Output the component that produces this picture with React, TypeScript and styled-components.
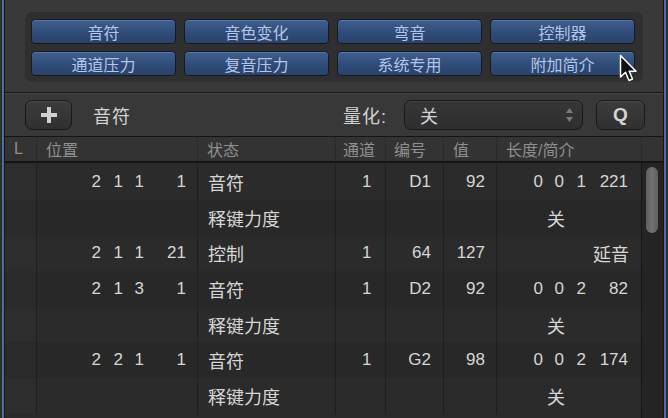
import React from "react";
import styled, { createGlobalStyle } from "styled-components";

const Global = createGlobalStyle`
  html, body { margin: 0; padding: 0; background: #1e1e1e; }
  body { font-family: "Liberation Sans", "Noto Sans CJK SC", sans-serif; }
`;

const Frame = styled.div`
  position: relative;
  width: 668px;
  height: 418px;
  display: flex;
  overflow: hidden;
  background: #2a2a2a;
`;

const Edge = styled.div<{ $side: "left" | "right" }>`
  flex: 0 0 auto;
  width: 5px;
  box-sizing: border-box;
  background: #4a6fa6;
  border-left: ${(p) => (p.$side === "left" ? "2px solid #2e2e2e" : "1px solid #151515")};
  border-right: ${(p) => (p.$side === "left" ? "1px solid #151515" : "2px solid #2e2e2e")};
`;

const Main = styled.div`
  flex: 1;
  display: flex;
  flex-direction: column;
  min-width: 0;
`;

const TopPanel = styled.div`
  height: 93px;
  box-sizing: border-box;
  padding: 12px 20px 0 20px;
  background: #393939;
  border-bottom: 1px solid #141414;
`;

const ButtonTray = styled.div`
  height: 70px;
  box-sizing: border-box;
  padding: 7px 4px 6px 6px;
  border-radius: 7px;
  background: #2f2f2f;
  display: grid;
  grid-template-columns: repeat(4, 145px);
  grid-template-rows: 25px 25px;
  column-gap: 8px;
  row-gap: 7px;
`;

const EventButton = styled.div`
  box-sizing: border-box;
  border-radius: 4px;
  border: 1px solid #141a24;
  background: linear-gradient(#41608f, #2f4b78 55%, #2a436c);
  box-shadow: inset 0 1px 0 rgba(150, 180, 230, 0.25);
  color: #b3c6e8;
  font-size: 16px;
  display: flex;
  align-items: center;
  justify-content: center;
`;

const Toolbar = styled.div`
  height: 44px;
  box-sizing: border-box;
  padding: 0 18px 0 20px;
  display: flex;
  align-items: center;
  background: #383838;
  border-top: 1px solid #454545;
  border-bottom: 1px solid #141414;
`;

const ToolButton = styled.div<{ $w: number }>`
  box-sizing: border-box;
  width: ${(p) => p.$w}px;
  height: 30px;
  border-radius: 7px;
  border: 1px solid #181818;
  background: linear-gradient(#3c3c3c, #303030);
  box-shadow: inset 0 1px 0 rgba(255, 255, 255, 0.08);
  display: flex;
  align-items: center;
  justify-content: center;
  color: #d4d4d4;
  font-weight: bold;
  font-size: 19px;
`;

const ToolLabel = styled.span<{ $ml: number }>`
  margin-left: ${(p) => p.$ml}px;
  color: #d2d2d2;
  font-size: 18px;
  letter-spacing: 1px;
`;

const Spacer = styled.div`
  flex: 1;
`;

const Select = styled.div`
  box-sizing: border-box;
  width: 179px;
  height: 30px;
  margin: 0 13px 0 17px;
  border-radius: 7px;
  border: 1px solid #181818;
  background: linear-gradient(#363636, #2e2e2e);
  box-shadow: inset 0 1px 0 rgba(255, 255, 255, 0.07);
  display: flex;
  align-items: center;
  padding: 0 8px 0 15px;
  color: #d2d2d2;
  font-size: 18px;
`;

const Header = styled.div`
  height: 24px;
  display: grid;
  grid-template-columns: 31px 161px 138px 50px 58px 53px 145px 1fr;
  background: #333333;
  border-bottom: 2px solid #141414;
`;

const HeadCell = styled.div<{ $pad?: number }>`
  display: flex;
  align-items: center;
  padding-left: ${(p) => p.$pad ?? 9}px;
  color: #8f8f8f;
  font-size: 16px;
  border-left: 1px solid #2a2a2a;
  white-space: nowrap;
  overflow: hidden;
  &:first-child { border-left: none; }
`;

const Body = styled.div`
  flex: 1;
  display: flex;
  min-height: 0;
`;

const Rows = styled.div`
  flex: 1;
  display: flex;
  flex-direction: column;
  padding-top: 1px;
  background: #2a2a2a;
`;

const Row = styled.div<{ $alt: boolean }>`
  flex: 0 0 35.7px;
  display: grid;
  grid-template-columns: 31px 161px 138px 50px 58px 53px 145px;
  background: ${(p) => (p.$alt ? "#282828" : "#2b2b2b")};
  color: #d6d6d6;
  font-size: 17px;
`;

const Cell = styled.div<{ $align?: "left" | "right" | "center"; $pr?: number; $pl?: number; $cjk?: boolean }>`
  display: flex;
  align-items: center;
  justify-content: ${(p) =>
    p.$align === "right" ? "flex-end" : p.$align === "center" ? "center" : "flex-start"};
  padding-right: ${(p) => p.$pr ?? 0}px;
  padding-left: ${(p) => p.$pl ?? 0}px;
  font-size: ${(p) => (p.$cjk ? 18 : 17)}px;
  border-left: 1px solid #1f1f1f;
  white-space: pre;
  &:first-child { border-left: none; background: rgba(255,255,255,0.012); }
`;

const Num = styled.span<{ $w: number }>`
  display: inline-block;
  width: ${(p) => p.$w}px;
  text-align: right;
`;

const ScrollTrack = styled.div`
  flex: 0 0 22px;
  box-sizing: border-box;
  border-left: 1px solid #161616;
  background: #242424;
  padding: 4px 5px 0 4px;
`;

const ScrollThumb = styled.div`
  height: 66px;
  border-radius: 7px;
  background: linear-gradient(90deg, #5e5e5e, #737373 50%, #5e5e5e);
`;

const Cursor = styled.svg`
  position: absolute;
  left: 619px;
  top: 54px;
`;

type RowData = {
  pos?: [string, string, string, string];
  status: string;
  ch?: string;
  num?: string;
  val?: string;
  len?: [string, string, string, string];
  lenText?: string;
  lenAlign?: "center" | "right";
};

const rows: RowData[] = [
  { pos: ["2", "1", "1", "1"], status: "音符", ch: "1", num: "D1", val: "92", len: ["0", "0", "1", "221"] },
  { status: "释键力度", lenText: "关", lenAlign: "center" },
  { pos: ["2", "1", "1", "21"], status: "控制", ch: "1", num: "64", val: "127", lenText: "延音", lenAlign: "right" },
  { pos: ["2", "1", "3", "1"], status: "音符", ch: "1", num: "D2", val: "92", len: ["0", "0", "2", "82"] },
  { status: "释键力度", lenText: "关", lenAlign: "center" },
  { pos: ["2", "2", "1", "1"], status: "音符", ch: "1", num: "G2", val: "98", len: ["0", "0", "2", "174"] },
  { status: "释键力度", lenText: "关", lenAlign: "center" },
];

const topButtons = ["音符", "音色变化", "弯音", "控制器", "通道压力", "复音压力", "系统专用", "附加简介"];

export default function App() {
  return (
    <>
      <Global />
      <Frame>
        <Edge $side="left" />
        <Main>
          <TopPanel>
            <ButtonTray>
              {topButtons.map((b) => (
                <EventButton key={b}>{b}</EventButton>
              ))}
            </ButtonTray>
          </TopPanel>
          <Toolbar>
            <ToolButton $w={47}>
              <svg width="18" height="18" viewBox="0 0 18 18">
                <path d="M7 1h4v6h6v4h-6v6H7v-6H1V7h6z" fill="#d0d0d0" />
              </svg>
            </ToolButton>
            <ToolLabel $ml={21}>音符</ToolLabel>
            <Spacer />
            <ToolLabel $ml={0}>量化:</ToolLabel>
            <Select>
              <span style={{ flex: 1 }}>关</span>
              <svg width="9" height="18" viewBox="0 0 9 18">
                <path d="M4.5 2L8 7H1z" fill="#7a7a7a" />
                <path d="M4.5 16L8 11H1z" fill="#7a7a7a" />
              </svg>
            </Select>
            <ToolButton $w={49}>Q</ToolButton>
          </Toolbar>
          <Header>
            <HeadCell>L</HeadCell>
            <HeadCell>位置</HeadCell>
            <HeadCell>状态</HeadCell>
            <HeadCell $pad={7}>通道</HeadCell>
            <HeadCell $pad={8}>编号</HeadCell>
            <HeadCell>值</HeadCell>
            <HeadCell>长度/简介</HeadCell>
            <HeadCell />
          </Header>
          <Body>
            <Rows>
              {rows.map((r, i) => (
                <Row key={i} $alt={i % 2 === 1}>
                  <Cell />
                  <Cell $align="right" $pr={11}>
                    {r.pos && (
                      <>
                        <Num $w={10}>{r.pos[0]}</Num>
                        <Num $w={22}>{r.pos[1]}</Num>
                        <Num $w={21}>{r.pos[2]}</Num>
                        <Num $w={42}>{r.pos[3]}</Num>
                      </>
                    )}
                  </Cell>
                  <Cell $pl={10} $cjk>{r.status}</Cell>
                  <Cell $pl={26}>{r.ch ?? ""}</Cell>
                  <Cell $align="right" $pr={12}>{r.num ?? ""}</Cell>
                  <Cell $align="right" $pr={11}>{r.val ?? ""}</Cell>
                  {r.len ? (
                    <Cell $align="right" $pr={13}>
                      <Num $w={10}>{r.len[0]}</Num>
                      <Num $w={21}>{r.len[1]}</Num>
                      <Num $w={22}>{r.len[2]}</Num>
                      <Num $w={42}>{r.len[3]}</Num>
                    </Cell>
                  ) : (
                    <Cell $cjk $align={r.lenAlign} $pr={r.lenAlign === "right" ? 12 : 26}>
                      {r.lenText}
                    </Cell>
                  )}
                </Row>
              ))}
            </Rows>
            <ScrollTrack>
              <ScrollThumb />
            </ScrollTrack>
          </Body>
        </Main>
        <Edge $side="right" />
        <Cursor width="20" height="30" viewBox="0 0 20 30">
          <path d="M1.5 1.5 L1.5 23 L6.5 18.3 L10 26.5 L13.5 25 L10.2 17.2 L17 17.2 Z" fill="#111" stroke="#fff" strokeWidth="1.5" strokeLinejoin="round" />
        </Cursor>
      </Frame>
    </>
  );
}
